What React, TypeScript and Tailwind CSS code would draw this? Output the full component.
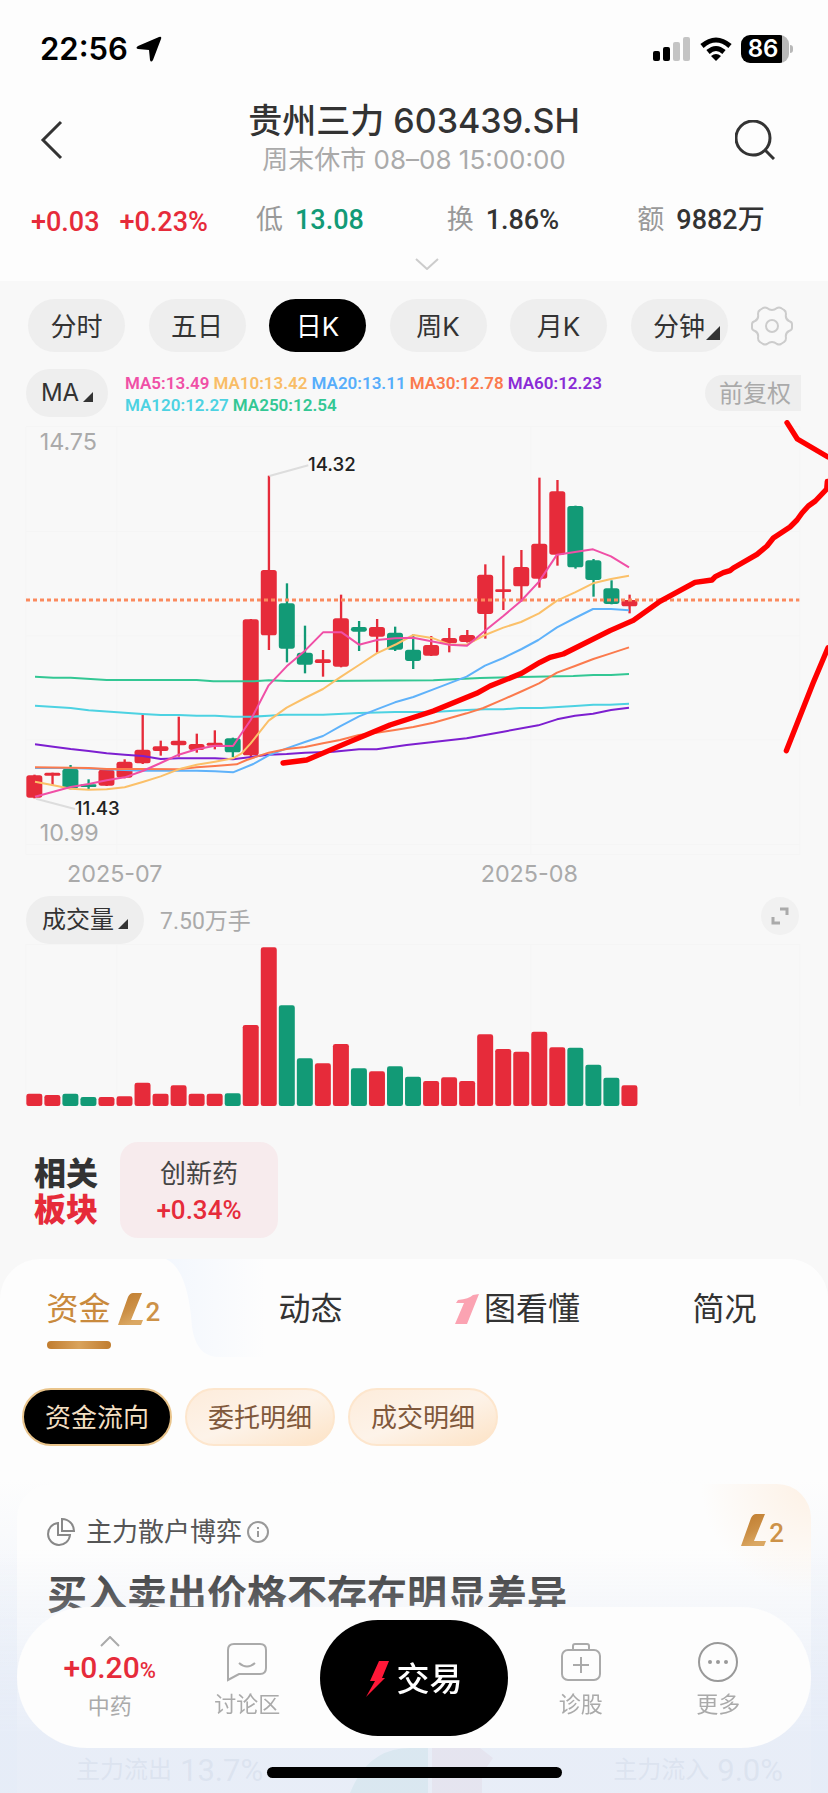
import React, { useState } from "react";

type Candle = {
  up: boolean;
  body: [number, number];
  wick: [number, number];
  volume: number;
};

const RED = "#e62b3a";
const GREEN = "#129a76";

const candles: Candle[] = [
  { up: true, body: [1066, 1133], wick: [1064, 1135], volume: 37 },
  { up: true, body: [1058, 1067], wick: [1058, 1097], volume: 33 },
  { up: false, body: [1046, 1105], wick: [1035, 1108], volume: 37 },
  { up: false, body: [1093, 1101], wick: [1078, 1107], volume: 27 },
  { up: true, body: [1049, 1097], wick: [1047, 1098], volume: 27 },
  { up: true, body: [1025, 1073], wick: [1018, 1075], volume: 29 },
  { up: true, body: [989, 1030], wick: [884, 1032], volume: 70 },
  { up: true, body: [979, 993], wick: [962, 1007], volume: 37 },
  { up: true, body: [962, 976], wick: [890, 1010], volume: 62 },
  { up: true, body: [972, 990], wick: [941, 998], volume: 37 },
  { up: true, body: [968, 977], wick: [931, 988], volume: 37 },
  { up: false, body: [955, 997], wick: [953, 1011], volume: 38 },
  { up: true, body: [598, 1006], wick: [597, 1011], volume: 243 },
  { up: true, body: [450, 646], wick: [167, 690], volume: 476 },
  { up: false, body: [550, 686], wick: [490, 727], volume: 302 },
  { up: false, body: [698, 734], wick: [617, 760], volume: 143 },
  { up: true, body: [718, 729], wick: [690, 770], volume: 128 },
  { up: true, body: [595, 740], wick: [524, 742], volume: 186 },
  { up: false, body: [621, 635], wick: [603, 693], volume: 113 },
  { up: true, body: [621, 650], wick: [597, 698], volume: 104 },
  { up: false, body: [638, 689], wick: [620, 693], volume: 119 },
  { up: false, body: [689, 723], wick: [643, 747], volume: 88 },
  { up: true, body: [675, 707], wick: [648, 708], volume: 75 },
  { up: true, body: [654, 670], wick: [624, 697], volume: 86 },
  { up: true, body: [645, 666], wick: [630, 668], volume: 75 },
  { up: true, body: [464, 582], wick: [433, 656], volume: 215 },
  { up: true, body: [508, 516], wick: [407, 570], volume: 171 },
  { up: true, body: [441, 499], wick: [390, 545], volume: 163 },
  { up: true, body: [371, 476], wick: [173, 503], volume: 223 },
  { up: true, body: [214, 404], wick: [180, 437], volume: 176 },
  { up: false, body: [258, 442], wick: [257, 446], volume: 175 },
  { up: false, body: [421, 480], wick: [417, 530], volume: 124 },
  { up: false, body: [505, 552], wick: [481, 553], volume: 85 },
  { up: true, body: [540, 559], wick: [524, 580], volume: 62 },
];

const averages = [
  {
    name: "MA250",
    color: "#33c794",
    points:
      "105,770 160,773 212,773 320,780 590,780 640,784 760,784 806,781 860,783 960,783 1300,781 1440,774 1600,770 1720,768 1780,765 1833,765 1887,762",
  },
  {
    name: "MA120",
    color: "#4dd2e2",
    points:
      "105,857 212,864 266,871 428,882 482,885 536,885 590,887 645,887 699,890 760,890 806,887 850,884 969,884 1077,879 1185,876 1300,876 1400,870 1455,868 1510,868 1560,864 1625,864 1725,858 1780,854 1830,854 1887,851",
  },
  {
    name: "MA60",
    color: "#7d1fd0",
    points:
      "105,973 160,980 212,987 266,993 320,1000 374,1004 428,1008 482,1017 536,1015 645,1015 699,1018 760,1010 806,1004 860,1002 915,998 1000,995 1077,988 1130,988 1220,975 1400,955 1510,935 1615,916 1671,898 1725,887 1779,881 1833,870 1887,863",
  },
  {
    name: "MA20",
    color: "#5fb2fa",
    points:
      "105,1044 212,1044 320,1048 428,1052 590,1052 645,1054 699,1057 760,1032 806,1006 860,985 915,966 969,948 1020,919 1077,889 1130,868 1185,847 1240,831 1300,808 1400,770 1455,737 1510,714 1565,687 1615,660 1671,622 1725,594 1779,567 1833,567 1887,571",
  },
  {
    name: "MA30",
    color: "#fb7a4d",
    points:
      "105,1042 266,1044 320,1047 428,1047 536,1048 590,1042 645,1038 710,1033 740,1020 806,998 860,987 915,981 969,970 1020,960 1077,945 1130,938 1185,930 1240,921 1300,908 1400,880 1450,864 1510,838 1567,813 1617,790 1671,758 1725,738 1780,717 1830,701 1887,682",
  },
  {
    name: "MA10",
    color: "#fbc069",
    points:
      "105,1085 160,1096 212,1106 266,1109 320,1108 374,1102 428,1086 482,1069 536,1048 590,1034 645,1025 699,1015 725,1000 752,970 806,902 860,863 915,834 969,807 1020,772 1077,735 1130,700 1190,672 1240,645 1300,655 1350,674 1400,674 1455,645 1510,623 1563,606 1617,580 1671,542 1725,517 1779,490 1833,477 1887,467",
  },
  {
    name: "MA5",
    color: "#f04fa6",
    points:
      "105,1130 160,1115 212,1101 266,1092 320,1081 374,1072 428,1053 482,1029 536,1004 590,988 645,977 699,978 752,900 806,796 860,739 915,692 969,637 1025,637 1077,674 1131,660 1185,655 1240,653 1294,664 1348,674 1401,677 1455,632 1510,588 1563,543 1617,485 1671,404 1725,396 1779,388 1833,409 1887,442",
  },
];

const trendStrokes = [
  "849,1029 920,1020 960,1003 1050,965 1170,915 1300,873 1430,820 1470,798 1565,760 1620,727 1650,712 1690,702 1830,632 1900,601 1980,544 2085,487 2136,480 2146,470 2170,458 2190,452 2200,444 2271,403 2301,378 2320,354 2370,321 2391,300 2406,279 2425,258 2446,243 2480,207 2482,184",
  "2361,8 2392,57 2484,111",
  "2359,992 2439,790 2484,683",
];

const legend = [
  { text: "MA5:13.49", style: "text-[#f04fa6]" },
  { text: "MA10:13.42", style: "text-[#f9bd66]" },
  { text: "MA20:13.11", style: "text-[#56adfb]" },
  { text: "MA30:12.78", style: "text-[#fb7a4d]" },
  { text: "MA60:12.23", style: "text-[#8a2bd6]" },
  { text: "MA120:12.27", style: "text-[#4dd2e2]" },
  { text: "MA250:12.54", style: "text-[#33c794]" },
];

const periods = ["分时", "五日", "日K", "周K", "月K", "分钟"];
const flows = ["资金流向", "委托明细", "成交明细"];

const candleX = (i: number) => 103 + 54 * i + i / 10;

function Corner({ className }: { className: string }) {
  return (
    <svg viewBox="0 0 10 10" className={className}>
      <path d="M10 0V10H0Z" fill="#333" />
    </svg>
  );
}

function LevelTwo() {
  return (
    <span className="flex items-end text-[#cd9248]">
      <svg viewBox="0 0 26 32" className="h-8 w-[26px]">
        <defs>
          <linearGradient id="gold" x1="0" y1="0" x2="0.4" y2="1">
            <stop offset="0" stopColor="#c07c2e" />
            <stop offset="0.6" stopColor="#cb8f45" />
            <stop offset="1" stopColor="#dba863" />
          </linearGradient>
        </defs>
        <path
          d="M15 0H24L13 27H25L23 32H0L10 4Q12 0 15 0Z"
          fill="url(#gold)"
        />
      </svg>
      <span className="pl-[2px] font-['Roboto',sans-serif] text-[26px] leading-[25px] font-medium">
        2
      </span>
    </span>
  );
}

function StatusBar() {
  return (
    <div className="flex h-[98px] items-center justify-between pr-[35px] pl-[40px] text-black">
      <div className="flex items-center gap-2">
        <span className="text-[31px] leading-[38px] font-semibold">22:56</span>
        <svg viewBox="0 0 26 26" className="size-[26px]">
          <path
            d="M23 1Q26 0 25 3L17 24Q15 27 14 24L13 14L2 13Q-1 12 2 10Z"
            fill="#000"
          />
        </svg>
      </div>
      <div className="flex items-center gap-[9px]">
        <svg viewBox="0 0 38 24" className="h-6 w-[38px]">
          <rect x="0" y="14" width="7" height="10" rx="2" fill="#000" />
          <rect x="10" y="10" width="7" height="14" rx="2" fill="#000" />
          <rect x="20" y="5" width="7" height="19" rx="2" fill="#c4c4c4" />
          <rect x="30" y="0" width="7" height="24" rx="2" fill="#c4c4c4" />
        </svg>
        <svg viewBox="0 0 32 24" className="h-6 w-8">
          <g fill="none" stroke="#000" strokeWidth="5">
            <path d="M2 9Q16 -3 30 9" />
            <path d="M8 15Q16 8 24 15" />
          </g>
          <path d="M11 19Q16 15 21 19L16 24Z" fill="#000" />
        </svg>
        <div className="flex items-center gap-px">
          <span className="flex h-7 w-12 items-center justify-center rounded-[9px] bg-linear-to-r from-black from-86% to-[#b8b8b8] to-86% pr-1 text-[24px] leading-7 font-semibold text-white">
            86
          </span>
          <span className="h-2 w-[3px] rounded-r-full bg-[#b8b8b8]" />
        </div>
      </div>
    </div>
  );
}

function Header() {
  return (
    <header className="bg-[#fdfdfd]">
      <StatusBar />
      <div className="flex h-[84px] items-center justify-between pr-[53px] pl-[40px]">
        <button aria-label="返回" className="w-[53px]">
          <svg viewBox="0 0 24 40" className="h-10 w-6">
            <path
              d="M21 2L3 20L21 38"
              fill="none"
              stroke="#333"
              strokeWidth="3"
            />
          </svg>
        </button>
        <div className="text-center">
          <h1 className="text-[34px] leading-[39px] font-medium text-[#333]">
            贵州三力 603439.SH
          </h1>
          <p className="text-[26px] leading-[39px] text-[#aaa]">
            周末休市 08–08 15:00:00
          </p>
        </div>
        <button aria-label="搜索">
          <svg viewBox="0 0 40 40" className="size-10">
            <g fill="none" stroke="#333" strokeWidth="3">
              <circle cx="18" cy="18" r="17" />
              <path d="M30 30L39 39" />
            </g>
          </svg>
        </button>
      </div>
      <div className="grid h-[72px] grid-cols-[225px_1fr_1fr_1fr] items-center pt-1 pl-[31px] font-['Roboto','Noto_Sans_CJK_SC',sans-serif] text-[27px] leading-9 font-medium text-[#333]">
        <div className="flex gap-5 pt-1 text-[#e62b3a]">
          <span>+0.03</span>
          <span>+0.23%</span>
        </div>
        <div className="flex gap-3">
          <span className="font-normal text-[#999]">低</span>
          <span className="text-[#129a76]">13.08</span>
        </div>
        <div className="flex gap-3">
          <span className="font-normal text-[#999]">换</span>
          <span>1.86%</span>
        </div>
        <div className="flex gap-3">
          <span className="font-normal text-[#999]">额</span>
          <span>9882万</span>
        </div>
      </div>
      <button
        aria-label="展开"
        className="flex h-[27px] w-full justify-center pt-1 pl-[26px]"
      >
        <svg viewBox="0 0 24 12" className="h-3 w-6">
          <path d="M1 1L12 11L23 1" fill="none" stroke="#ccc" strokeWidth="2" />
        </svg>
      </button>
    </header>
  );
}

function PriceChart() {
  return (
    <svg viewBox="0 0 2484 1425" className="mt-[3px] block w-full">
      <g stroke="#f5f5f5" strokeWidth="3">
        <path d="M78 20H2400M78 335H2400M78 648H2400M78 960H2400M78 1273H2400M78 1304H2400" />
        <path d="M78 20V1304M351 20V1304M1593 20V1304M2400 20V1304" />
      </g>
      {candles.map((c, i) => (
        <g key={i} fill={c.up ? RED : GREEN}>
          <rect
            x={candleX(i) - 3}
            y={c.wick[0]}
            width="7"
            height={c.wick[1] - c.wick[0]}
          />
          <rect
            x={candleX(i) - 24}
            y={c.body[0]}
            width="48"
            height={c.body[1] - c.body[0]}
            rx={Math.min(8, (c.body[1] - c.body[0]) / 2)}
          />
        </g>
      ))}
      <path
        d="M78 540H2398"
        stroke="#fb8a5e"
        strokeWidth="9"
        strokeDasharray="12 9"
      />
      {averages.map((line) => (
        <polyline
          key={line.name}
          points={line.points}
          fill="none"
          stroke={line.color}
          strokeWidth="6"
          strokeLinejoin="round"
        />
      ))}
      <path
        d="M808 168L925 136M108 1136L225 1167"
        stroke="#ddd"
        strokeWidth="6"
      />
      <g fill="#222" fontSize="56" fontWeight="500">
        <text x="924" y="153">
          14.32
        </text>
        <text x="224" y="1184">
          11.43
        </text>
      </g>
      <g fill="#aaa" fontSize="70">
        <text x="119" y="90">
          14.75
        </text>
        <text x="119" y="1262">
          10.99
        </text>
        <text x="201" y="1385">
          2025-07
        </text>
        <text x="1442" y="1385">
          2025-08
        </text>
      </g>
      {trendStrokes.map((points) => (
        <polyline
          key={points}
          points={points}
          fill="none"
          stroke="#f00"
          strokeWidth="16"
          strokeLinecap="round"
          strokeLinejoin="round"
        />
      ))}
    </svg>
  );
}

function VolumeChart() {
  return (
    <svg viewBox="0 0 2484 489" className="block w-full">
      <path
        d="M78 1H2400M78 0V486M351 0V486M1593 0V486M2400 0V486"
        stroke="#f5f5f5"
        strokeWidth="3"
      />
      {candles.map((c, i) => (
        <rect
          key={i}
          x={candleX(i) - 24}
          y={486 - c.volume}
          width="48"
          height={c.volume}
          rx="7"
          fill={c.up ? RED : GREEN}
        />
      ))}
    </svg>
  );
}

function ChartSection() {
  const [period, setPeriod] = useState("日K");

  return (
    <section className="bg-[#f8f8f8] pt-[18px]">
      <div className="flex items-center justify-between pr-[35px] pl-7">
        {periods.map((item) => (
          <button
            key={item}
            onClick={() => setPeriod(item)}
            className={`relative h-[53px] w-[97px] rounded-full pt-[2px] text-[26px] leading-9 ${
              item === period ? "bg-black text-white" : "bg-[#eee] text-[#333]"
            }`}
          >
            {item}
            {item === "分钟" && (
              <Corner className="absolute right-2 bottom-3 size-[14px]" />
            )}
          </button>
        ))}
        <button aria-label="设置">
          <svg viewBox="0 0 42 40" className="h-10 w-[42px]">
            <g fill="none" stroke="#ccc" strokeWidth="2">
              <path d="M12 2Q14 1 16 2Q21 6 26 2Q28 1 30 2L33 4Q35 5 35 8Q34 13 38 15Q41 16 41 18V22Q41 24 38 25Q34 27 35 32Q35 35 33 36L30 38Q28 39 26 38Q21 34 16 38Q14 39 12 38L9 36Q7 35 7 32Q8 27 4 25Q1 24 1 22V18Q1 16 4 15Q8 13 7 8Q7 5 9 4Z" />
              <circle cx="21" cy="20" r="6" />
            </g>
          </svg>
        </button>
      </div>

      <div className="mt-[17px] flex items-start pr-[27px] pl-[26px]">
        <button className="flex h-12 w-[82px] items-center justify-center gap-1 rounded-full bg-[#eee] text-2xl text-[#333]">
          MA
          <Corner className="mt-2 size-[10px]" />
        </button>
        <div className="ml-[17px] flex w-[500px] flex-wrap gap-x-1 pt-[3px] font-['Roboto',sans-serif] text-[17px] leading-[22px] font-semibold">
          {legend.map((item) => (
            <span key={item.text} className={item.style}>
              {item.text}
            </span>
          ))}
        </div>
        <button className="mt-[6px] ml-auto h-9 rounded-l-full bg-[#eee] pr-[10px] pl-[14px] text-2xl leading-[38px] text-[#aaa]">
          前复权
        </button>
      </div>

      <PriceChart />

      <div className="mt-px flex items-center pr-[29px] pl-[26px]">
        <button className="flex h-12 w-[118px] items-center justify-center gap-1 rounded-full bg-[#eee] text-2xl text-[#333]">
          成交量
          <Corner className="mt-2 size-[10px]" />
        </button>
        <span className="ml-4 pt-1 font-['Roboto','Noto_Sans_CJK_SC',sans-serif] text-[23px] text-[#aaa]">
          7.50万手
        </span>
        <button
          aria-label="全屏"
          className="mb-2 ml-auto flex size-[38px] items-center justify-center rounded-full bg-[#f1f1f1]"
        >
          <svg viewBox="0 0 18 18" className="size-[18px]">
            <path
              d="M9 2H16V8M2 10V16H9"
              fill="none"
              stroke="#aaa"
              strokeWidth="3"
            />
          </svg>
        </button>
      </div>
      <VolumeChart />

      <div className="flex items-center gap-[22px] pt-[35px] pb-[21px] pl-[34px]">
        <h2 className="pt-1 text-[32px] leading-9 font-black text-[#333]">
          相关
          <br />
          <span className="text-[#e62b3a]">板块</span>
        </h2>
        <a
          href="#sector"
          className="flex h-24 w-[158px] flex-col items-center justify-center rounded-[18px] bg-[#f7ebed] pt-1 text-[26px] leading-9 text-[#444]"
        >
          创新药
          <span className="font-['Roboto',sans-serif] font-medium text-[#e62b3a]">
            +0.34%
          </span>
        </a>
      </div>
    </section>
  );
}

function Tabs() {
  return (
    <nav className="relative grid h-[98px] grid-cols-4 overflow-hidden rounded-t-[40px] bg-[#fdfdfd] text-[32px] text-[#333]">
      <svg
        viewBox="0 0 828 98"
        preserveAspectRatio="none"
        className="absolute inset-0 size-full"
      >
        <defs>
          <linearGradient id="strip" x1="0" x2="1">
            <stop offset="0" stopColor="#f3f7fd" />
            <stop offset="0.15" stopColor="#fdfdfd" />
          </linearGradient>
        </defs>
        <path
          d="M166 0H828V98H216Q196 96 192 68Q188 10 166 0Z"
          fill="url(#strip)"
        />
      </svg>
      <a
        href="#funds"
        className="relative flex items-center justify-center gap-[7px] pt-[2px] text-[#c98a3d]"
      >
        <span className="relative">
          资金
          <span className="absolute -bottom-4 left-0 h-2 w-full rounded-sm bg-linear-to-r from-[#c07c2e] via-[#d9a35c] to-[#c07c2e]" />
        </span>
        <LevelTwo />
      </a>
      <a
        href="#news"
        className="relative flex items-center justify-center pt-[2px]"
      >
        动态
      </a>
      <a
        href="#overview"
        className="relative flex items-center justify-center gap-[5px] pt-[2px]"
      >
        <svg viewBox="0 0 24 30" className="h-[30px] w-6">
          <path d="M3 6Q14 5 18 1L24 0L12 30H0L9 9H1Z" fill="#fba3b2" />
        </svg>
        图看懂
      </a>
      <a
        href="#profile"
        className="relative flex items-center justify-center pt-[2px]"
      >
        简况
      </a>
    </nav>
  );
}

function FundFlow() {
  const [flow, setFlow] = useState("资金流向");

  return (
    <section className="bg-linear-to-b from-[#fdfdfd] from-28% to-[#e8eef8] to-90% pt-[31px]">
      <div className="flex gap-[13px] px-[22px]">
        {flows.map((item) => (
          <button
            key={item}
            onClick={() => setFlow(item)}
            className={`h-[58px] w-[150px] rounded-full border-2 pt-[2px] text-[26px] leading-9 ${
              item === flow
                ? "border-[#e9c48b] bg-black text-[#f3dfc2]"
                : "border-[#fde6cd] bg-linear-to-br from-[#fdecdb] via-[#fdf3e9] to-[#fde3c6] text-[#80583b]"
            }`}
          >
            {item}
          </button>
        ))}
      </div>

      <div className="mx-[17px] mt-[38px] rounded-t-[34px] bg-[radial-gradient(circle_at_top_right,#fdf1e5,#fdfdfd_110px)] pt-[33px] pr-[27px] pl-[30px]">
        <div className="flex h-[30px] items-center">
          <svg viewBox="0 0 28 28" className="size-7">
            <g fill="none" stroke="#888" strokeWidth="2">
              <path d="M11 5A11 11 0 1 0 23 17H11Z" />
              <path d="M15 1V13H27A12 12 0 0 0 15 1Z" />
            </g>
          </svg>
          <h3 className="pl-[11px] text-[26px] leading-[30px] text-[#555]">
            主力散户博弈
          </h3>
          <button aria-label="说明" className="ml-1">
            <svg viewBox="0 0 24 24" className="size-6">
              <circle
                cx="12"
                cy="12"
                r="10"
                fill="none"
                stroke="#999"
                strokeWidth="2"
              />
              <path d="M12 11V17M12 7V9" stroke="#999" strokeWidth="2" />
            </svg>
          </button>
          <span className="ml-auto pb-1">
            <LevelTwo />
          </span>
        </div>
        <p className="mt-6 text-[40px] leading-[48px] font-bold whitespace-nowrap text-[#333]">
          买入卖出价格不存在明显差异
        </p>
        <div className="mt-[129px] flex h-[45px] items-center justify-between pr-px pl-[29px] text-2xl text-[#8894aa]">
          <span className="flex w-[200px] items-center whitespace-nowrap">
            主力流出
            <span className="pl-2 font-['Roboto',sans-serif] text-[31px]">
              13.7%
            </span>
          </span>
          <svg viewBox="0 0 160 45" className="h-[45px] w-40">
            <path d="M0 45Q18 0 60 0H78V45Z" fill="#6fc0b8" />
            <path d="M82 0H130L143 10L132 26V45H82Z" fill="#dfa0ad" />
          </svg>
          <span className="flex w-[200px] items-center justify-end whitespace-nowrap">
            主力流入
            <span className="pl-2 font-['Roboto',sans-serif] text-[31px]">
              9.0%
            </span>
          </span>
        </div>
      </div>
    </section>
  );
}

function BottomBar() {
  return (
    <div className="fixed inset-x-0 bottom-0 bg-linear-to-b from-[#e6ecf7]/0 to-[#e6ecf7]/90 to-75% px-[17px] pt-[57px] pb-[15px]">
      <div className="grid h-[141px] grid-cols-[1fr_1fr_196px_1fr_1fr] items-center rounded-full bg-[#fdfdfd] px-6 text-[22px] leading-7 text-[#aaa]">
        <a href="#tcm" className="flex flex-col items-center">
          <svg viewBox="0 0 20 11" className="h-[11px] w-5">
            <path
              d="M1 10L10 1L19 10"
              fill="none"
              stroke="#aaa"
              strokeWidth="2"
            />
          </svg>
          <span className="font-['Roboto',sans-serif] text-[30px] leading-[42px] font-medium whitespace-nowrap text-[#e62b3a]">
            +0.20<span className="text-[22px]">%</span>
          </span>
          中药
        </a>
        <a href="#talk" className="flex flex-col items-center gap-2 pt-1">
          <svg viewBox="0 0 40 40" className="size-10">
            <g fill="none" stroke="#aaa" strokeWidth="2">
              <path d="M7 2H33Q39 2 39 8V26Q39 32 33 32H12L1 38V8Q1 2 7 2Z" />
              <path d="M12 21Q20 28 28 21" />
            </g>
          </svg>
          讨论区
        </a>
        <button className="mx-1 flex h-[116px] items-center justify-center gap-[7px] rounded-full bg-black pt-[2px] text-[33px] font-medium text-white">
          <svg viewBox="0 0 24 36" className="h-9 w-6">
            <path d="M13 0H23L16 17H19L0 36L9 20H4Z" fill="#ff1838" />
          </svg>
          交易
        </button>
        <a href="#diagnose" className="flex flex-col items-center gap-2 pt-1">
          <svg viewBox="0 0 40 40" className="size-10">
            <g fill="none" stroke="#aaa" strokeWidth="2">
              <rect x="1" y="8" width="38" height="30" rx="6" />
              <path d="M12 8V4Q12 2 14 2H26Q28 2 28 4V8" />
              <path d="M20 15V31M12 23H28" />
            </g>
          </svg>
          诊股
        </a>
        <a href="#more" className="flex flex-col items-center gap-2 pt-1">
          <svg viewBox="0 0 40 40" className="size-10">
            <circle
              cx="20"
              cy="20"
              r="19"
              fill="none"
              stroke="#999"
              strokeWidth="2"
            />
            <g fill="#999">
              <circle cx="12" cy="20" r="2" />
              <circle cx="20" cy="20" r="2" />
              <circle cx="28" cy="20" r="2" />
            </g>
          </svg>
          更多
        </a>
      </div>
      <div className="mx-auto mt-[19px] h-[11px] w-[295px] rounded-full bg-black" />
    </div>
  );
}

export default function App() {
  return (
    <div className="min-h-screen overflow-hidden bg-[#e8eef8] font-['Inter','Noto_Sans_CJK_SC',sans-serif]">
      <Header />
      <ChartSection />
      <div className="bg-[#f8f8f8]">
        <Tabs />
      </div>
      <FundFlow />
      <BottomBar />
    </div>
  );
}
